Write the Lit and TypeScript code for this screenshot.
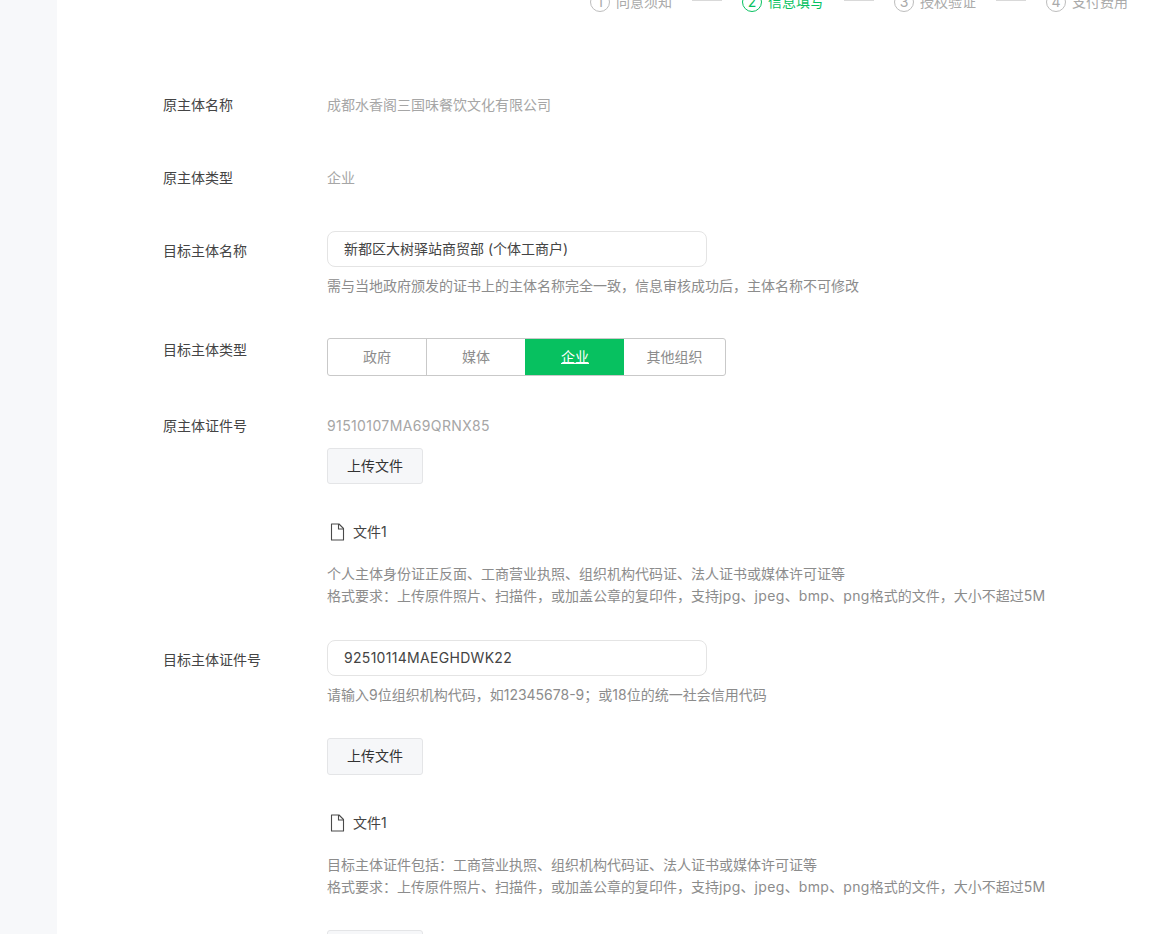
import { LitElement, html, css } from "lit";
import { customElement } from "lit/decorators.js";

const fileIcon = html`<svg class="ficon" width="16" height="18" viewBox="0 0 16 18" fill="none" stroke="#4a4a4a" stroke-width="1.1"><path d="M2.5 1h7.5l4.5 4.5v11.5h-12z" stroke-linejoin="round"/><path d="M9.5 1v5h5"/></svg>`;
const lat = (t: string) => html`<span class="lat">${t}</span>`;
const format = html`格式要求：上传原件照片、扫描件，或加盖公章的复印件，支持${lat("jpg")}、${lat("jpeg")}、${lat("bmp")}、${lat("png")}格式的文件，大小不超过${lat("5M")}`;

@customElement("app-root")
export class AppRoot extends LitElement {
  static styles = css`
    :host { display: block; height: 934px; overflow: hidden; background: #f7f8fa;
      font-family: "Inter", "Noto Sans CJK SC", sans-serif; font-size: 14px; line-height: 22px; color: #444; }
    .main { margin-left: 57px; background: #fff; height: 934px; overflow: hidden; }
    .steps { display: flex; justify-content: flex-end; align-items: center; height: 20px; margin-top: -8px; padding-right: 33px; color: #aaa; }
    .step { display: flex; align-items: center; }
    .num { width: 20px; height: 20px; box-sizing: border-box; border: 1px solid #bdbdbd; border-radius: 50%; display: flex; align-items: center; justify-content: center; margin-right: 6px; }
    .step.on { color: #07c160; }
    .step.on .num { border-color: #07c160; }
    .line { width: 30px; height: 1px; background: #d9d9d9; margin: 0 20px; position: relative; top: -2px; }
    .form { padding: 75px 0 0 106px; }
    .row { display: grid; grid-template-columns: 164px 1fr; }
    .label { line-height: 22px; }
    .pad { padding-top: 9px; }
    .pad7 { padding-top: 7px; }
    .pad1 { padding-top: 1px; }
    .val { color: #a6a6a6; height: 36px; line-height: 36px; }
    .num-val { color: #a6a6a6; line-height: 22px; letter-spacing: 0.38px; }
    .r1 { margin-bottom: 37px; }
    .r2 { margin-bottom: 35px; }
    .r3 { margin-bottom: 41px; }
    .r4 { margin-bottom: 39px; }
    .r5 { margin-bottom: 33px; }
    .box { width: 380px; height: 36px; box-sizing: border-box; border: 1px solid #e4e4e4; border-radius: 8px; padding: 0 16px; line-height: 34px; color: #444; }
    .code { letter-spacing: 0.3px; }
    .lat { letter-spacing: 0.35px; }
    .hint { color: #8c8c8c; }
    .mt8 { margin-top: 8px; }
    .seg { display: inline-flex; height: 38px; box-sizing: border-box; border: 1px solid #c9c9c9; border-radius: 3px; }
    .seg span { min-width: 99px; box-sizing: border-box; padding: 0 22px; text-align: center; line-height: 36px; color: #8c8c8c; border-left: 1px solid #c9c9c9; }
    .seg span:first-child { border-left: 0; min-width: 98px; }
    .seg span:last-child { min-width: 101px; }
    .seg span.on { background: #07c160; color: #fff; text-decoration: underline; border-left-color: #07c160; }
    .seg span.on + span { border-left: 0; }
    .btn { width: 96px; height: 36px; box-sizing: border-box; background: #f6f7f9; border: 1px solid #e4e5e7; border-radius: 3px; text-align: center; line-height: 34px; color: #333; }
    .b11 { margin-top: 11px; }
    .b32 { margin-top: 32px; height: 37px; }
    .file { display: flex; align-items: center; margin-top: 37px; }
    .ficon { margin: 0 8px 0 2px; }
    .hints { margin-top: 20px; white-space: nowrap; }
  `;

  render() {
    const steps = ["同意须知", "信息填写", "授权验证", "支付费用"];
    return html`<div class="main">
      <div class="steps">
        ${steps.map((s, i) => html`${i ? html`<i class="line"></i>` : ""}<div class="step ${i === 1 ? "on" : ""}"><span class="num">${i + 1}</span>${s}</div>`)}
      </div>
      <div class="form">
        <div class="row r1"><div class="label pad7">原主体名称</div><div class="val">成都水香阁三国味餐饮文化有限公司</div></div>
        <div class="row r2"><div class="label pad7">原主体类型</div><div class="val">企业</div></div>
        <div class="row r3"><div class="label pad">目标主体名称</div><div>
          <div class="box">新都区大树驿站商贸部 (个体工商户)</div>
          <div class="hint mt8">需与当地政府颁发的证书上的主体名称完全一致，信息审核成功后，主体名称不可修改</div>
        </div></div>
        <div class="row r4"><div class="label pad1">目标主体类型</div><div>
          <div class="seg"><span>政府</span><span>媒体</span><span class="on">企业</span><span>其他组织</span></div>
        </div></div>
        <div class="row r5"><div class="label">原主体证件号</div><div>
          <div class="num-val">91510107MA69QRNX85</div>
          <div class="btn b11">上传文件</div>
          <div class="file">${fileIcon}文件1</div>
          <div class="hint hints">个人主体身份证正反面、工商营业执照、组织机构代码证、法人证书或媒体许可证等<br>${format}</div>
        </div></div>
        <div class="row"><div class="label pad">目标主体证件号</div><div>
          <div class="box code">92510114MAEGHDWK22</div>
          <div class="hint mt8">请输入9位组织机构代码，如12345678-9；或18位的统一社会信用代码</div>
          <div class="btn b32">上传文件</div>
          <div class="file">${fileIcon}文件1</div>
          <div class="hint hints">目标主体证件包括：工商营业执照、组织机构代码证、法人证书或媒体许可证等<br>${format}</div>
          <div class="btn b32">上传文件</div>
        </div></div>
      </div>
    </div>`;
  }
}
